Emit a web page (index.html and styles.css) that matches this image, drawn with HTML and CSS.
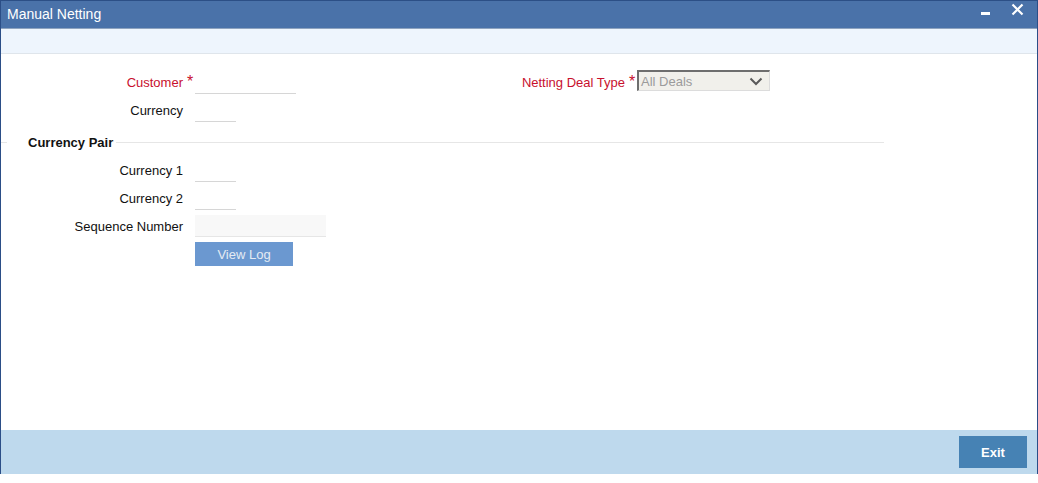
FILE: index.html
```html
<!DOCTYPE html>
<html>
<head>
<meta charset="utf-8">
<title>Manual Netting</title>
<link rel="stylesheet" href="styles.css">
</head>
<body>
<div class="window">
  <div class="titlebar">
    <span class="title">Manual Netting</span>
    <div class="win-controls">
      <svg class="ico-min" width="10" height="4" viewBox="0 0 10 4"><rect x="0" y="0" width="9" height="3" fill="#fff"/></svg>
      <svg class="ico-close" width="13" height="13" viewBox="0 0 13 13"><path d="M1.5 1.5 L11.5 11.5 M11.5 1.5 L1.5 11.5" stroke="#fff" stroke-width="2.2" fill="none"/></svg>
    </div>
  </div>
  <div class="toolband"></div>
  <div class="content">
    <div class="top-grid">
      <div class="col">
        <div class="row">
          <div class="label req">Customer<span class="star">*</span></div>
          <div class="input w101"></div>
        </div>
        <div class="row">
          <div class="label">Currency<span class="star"></span></div>
          <div class="input w41"></div>
        </div>
      </div>
      <div class="col col-right">
        <div class="row row-select">
          <div class="label label-right req">Netting Deal Type<span class="star">*</span></div>
          <div class="select">
            <span class="select-text">All Deals</span>
            <svg class="chev" width="14" height="9" viewBox="0 0 14 9"><path d="M1.5 1.5 L7 7 L12.5 1.5" stroke="#5a5a5a" stroke-width="2" fill="none"/></svg>
          </div>
        </div>
      </div>
    </div>
    <div class="legend-row">
      <div class="line line-start"></div>
      <div class="legend">Currency Pair</div>
      <div class="line line-rest"></div>
    </div>
    <div class="col">
      <div class="row">
        <div class="label">Currency 1<span class="star"></span></div>
        <div class="input w41"></div>
      </div>
      <div class="row">
        <div class="label">Currency 2<span class="star"></span></div>
        <div class="input w41"></div>
      </div>
      <div class="row">
        <div class="label">Sequence Number<span class="star"></span></div>
        <div class="input-box"></div>
      </div>
      <div class="row-btn">
        <div class="btn-view">View Log</div>
      </div>
    </div>
  </div>
  <div class="footer">
    <div class="btn-exit">Exit</div>
  </div>
</div>
</body>
</html>
```
FILE: styles.css
```css
html, body {
  margin: 0;
  padding: 0;
  background: #ffffff;
}
body {
  font-family: "Liberation Sans", Arial, sans-serif;
  font-size: 13px;
  color: #111;
}
.window {
  width: 1038px;
  height: 474px;
  box-sizing: border-box;
  border-left: 1px solid #2b4e87;
  border-right: 1px solid #2b4e87;
  display: flex;
  flex-direction: column;
  background: #fff;
}
.titlebar {
  height: 28px;
  box-sizing: border-box;
  background: #4a72a9;
  border-top: 1px solid #2c4f86;
  display: flex;
  align-items: center;
  justify-content: space-between;
  padding: 0 0 0 6px;
}
.title {
  color: #fff;
  font-size: 14px;
  margin-top: -1px;
}
.win-controls {
  display: flex;
  align-items: flex-start;
  height: 27px;
  padding-right: 13px;
}
.ico-min {
  margin-top: 11px;
  margin-right: 20px;
}
.ico-close {
  margin-top: 2px;
}
.toolband {
  height: 26px;
  box-sizing: border-box;
  background: #eef5fd;
  border-top: 1px solid #8ea3bf;
  border-bottom: 1px solid #dfe5eb;
}
.content {
  flex: 1;
  padding-top: 14px;
}
.top-grid {
  display: grid;
  grid-template-columns: 439px 1fr;
}
.col {
  display: flex;
  flex-direction: column;
}
.row {
  display: flex;
  align-items: center;
  height: 28px;
}
.row-select {
  align-items: flex-start;
}
.label {
  width: 194px;
  height: 28px;
  display: flex;
  justify-content: flex-end;
  align-items: center;
  color: #111;
  white-space: nowrap;
}
.label-right {
  width: 197px;
}
.req {
  color: #c8102e;
}
.star {
  display: inline-block;
  width: 12px;
  box-sizing: border-box;
  padding-left: 4px;
  color: #c8102e;
  align-self: flex-start;
  margin-top: 6px;
  font-size: 16px;
  line-height: 1;
}
.input {
  height: 24px;
  box-sizing: border-box;
  border-bottom: 1px solid #d6d6d6;
}
.w101 { width: 101px; }
.w41 { width: 41px; }
.input-box {
  width: 131px;
  height: 22px;
  box-sizing: border-box;
  background: #f8f8f8;
  border-bottom: 1px solid #e6e6e6;
}
.select {
  margin-top: 2px;
  width: 133px;
  height: 21px;
  box-sizing: border-box;
  background: #f1f0eb;
  border-top: 2px solid #6e6e6e;
  border-left: 2px solid #6e6e6e;
  border-right: 1px solid #dcdcdc;
  border-bottom: 1px solid #dcdcdc;
  display: flex;
  align-items: center;
  justify-content: space-between;
  padding: 0 6px 0 2px;
}
.select-text {
  color: #9b9b9b;
  font-size: 13px;
}
.chev {
  margin-top: 1px;
}
.legend-row {
  display: flex;
  align-items: center;
  height: 28px;
  margin-top: 4px;
  width: 883px;
}
.line {
  height: 1px;
  background: #e6e6e6;
}
.line-start {
  width: 6px;
}
.legend {
  font-weight: bold;
  padding: 0 3px 0 21px;
  color: #111;
}
.line-rest {
  flex: 1;
}
.row-btn {
  display: flex;
  padding-left: 194px;
  margin-top: 2px;
}
.btn-view {
  width: 98px;
  height: 24px;
  background: #6b98d0;
  color: #e4ebf3;
  display: flex;
  align-items: center;
  justify-content: center;
}
.footer {
  height: 44px;
  background: #bed9ed;
  display: flex;
  justify-content: flex-end;
  align-items: flex-start;
  padding: 6px 10px 0 0;
  box-sizing: border-box;
}
.btn-exit {
  width: 68px;
  height: 32px;
  background: #4682b4;
  color: #fff;
  font-weight: bold;
  font-size: 13px;
  display: flex;
  align-items: center;
  justify-content: center;
}
```
